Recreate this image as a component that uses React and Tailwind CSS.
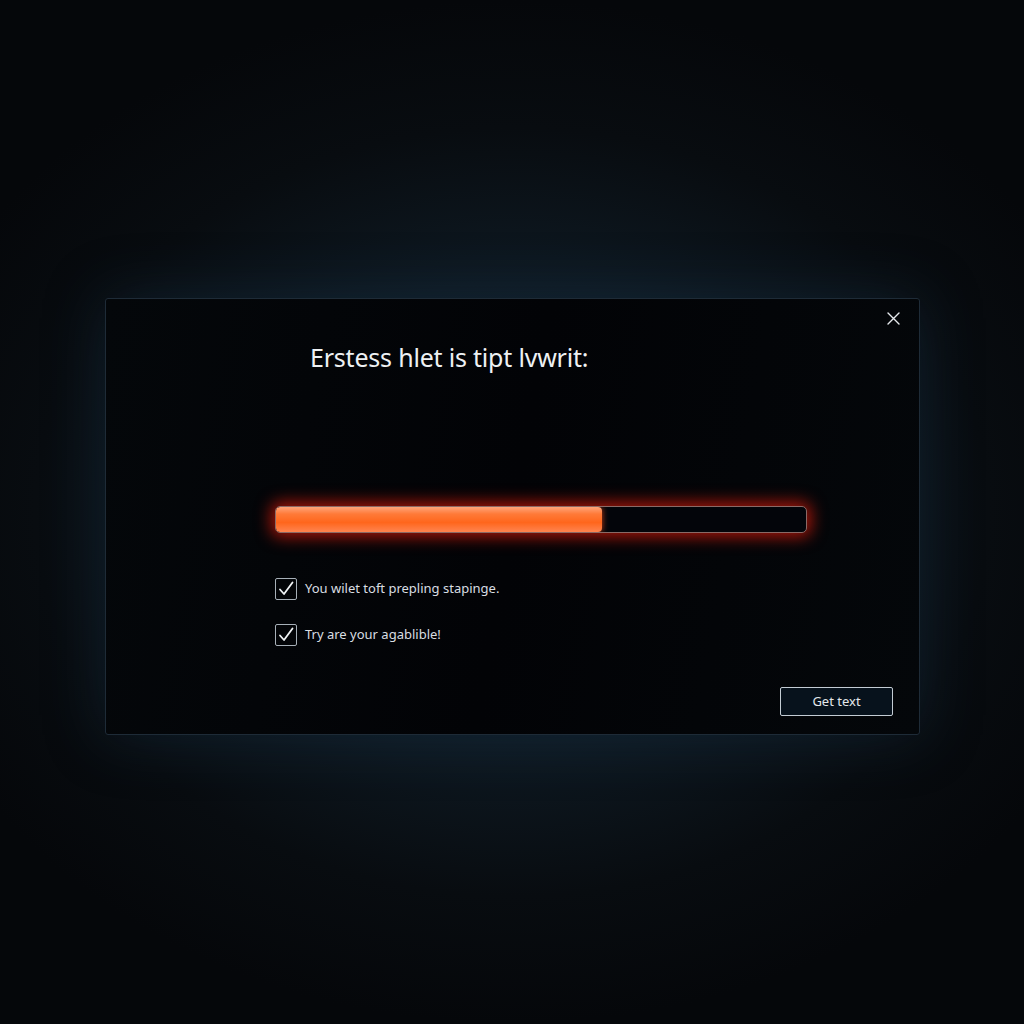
import React from "react";

function Check() {
  return (
    <span className="flex h-[22px] w-[22px] items-center justify-center rounded-[2px] border-[1.5px] border-[#a7b0b8]">
      <svg width="18" height="18" viewBox="0 0 18 18" fill="none">
        <path d="M3 9.5 L7 14 L15.5 2.5" stroke="#f1f4f6" strokeWidth="1.8" strokeLinecap="round" strokeLinejoin="round" />
      </svg>
    </span>
  );
}

export default function App() {
  return (
    <div className="flex h-[1024px] w-[1024px] flex-col bg-[radial-gradient(ellipse_62%_50%_at_50%_50%,#13222e_0%,#0e1922_45%,#080c10_75%,#05070a_100%)] font-['Noto_Sans',sans-serif]">
      <div className="relative ml-[105px] mt-[298px] flex h-[437px] w-[815px] flex-col rounded-[3px] border border-[#1e2b37] bg-[linear-gradient(100deg,#04070a_0%,#020306_50%,#04070a_100%)] shadow-[0_0_60px_rgba(30,60,85,0.35)]">
        <button className="absolute right-[19px] top-[12px] flex h-[14px] w-[14px] items-center justify-center">
          <svg width="13" height="13" viewBox="0 0 13 13" fill="none">
            <path d="M1 1 L12 12 M12 1 L1 12" stroke="#e6eaee" strokeWidth="1.4" strokeLinecap="round" />
          </svg>
        </button>

        <div className="flex flex-col pl-[169px] pt-[42px]">
          <h1 className="ml-[35px] text-[25px] leading-[32px] tracking-[-0.2px] text-[#eef1f3]">
            Erstess hlet is tipt lvwrit:
          </h1>

          <div className="mt-[133px] flex h-[27px] w-[532px] overflow-hidden rounded-[5px] border border-[#8a6a66] bg-[#03050a] shadow-[0_0_16px_4px_rgba(255,30,10,0.65)]">
            <div
              className="h-full rounded-[4px] bg-[linear-gradient(180deg,#ffa47a_0%,#ff7a38_28%,#ff661c_62%,#ff8450_100%)] shadow-[0_0_6px_rgba(255,80,30,0.8)]"
              style={{ width: "61.5%" }}
            />
          </div>

          <div className="mt-[45px] flex flex-col gap-[24px]">
            <label className="flex items-center gap-[8px] text-[13px] text-[#d9dee2]">
              <Check />
              <span>You wilet toft prepling stapinge.</span>
            </label>
            <label className="flex items-center gap-[8px] text-[13px] text-[#d9dee2]">
              <Check />
              <span>Try are your agablible!</span>
            </label>
          </div>
        </div>

        <div className="mt-auto flex justify-end pb-[18px] pr-[26px]">
          <button className="flex h-[29px] w-[113px] items-center justify-center rounded-[2px] border-[1.5px] border-[#c3ccd4] bg-[#07121c] text-[13px] text-[#e4e8eb]">
            Get text
          </button>
        </div>
      </div>
    </div>
  );
}
